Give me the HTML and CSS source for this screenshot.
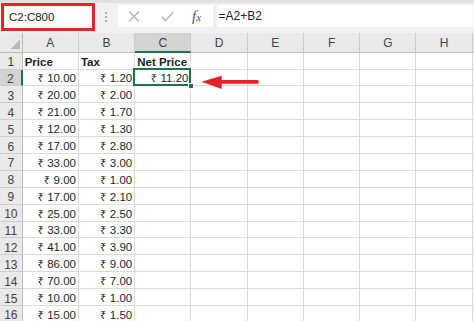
FILE: index.html
```html
<!DOCTYPE html>
<html lang="en">
<head>
  <meta charset="UTF-8">
  <meta name="viewport" content="width=device-width, initial-scale=1.0">
  <link rel="stylesheet" href="styles.css">
  <title>Net Price</title>
</head>
<body>
  <div class="formula-bar">
    <div class="name-box">C2:C800</div>
    <svg class="grip" width="4" height="12" viewBox="0 0 4 12">
      <circle cx="2" cy="2" r="1.1" fill="#a3a3a3"/>
      <circle cx="2" cy="6" r="1.1" fill="#a3a3a3"/>
      <circle cx="2" cy="10" r="1.1" fill="#a3a3a3"/>
    </svg>
    <div class="fx-buttons">
      <svg class="btn-cancel" width="12" height="11" viewBox="0 0 12 11">
        <path d="M1 0.5 L11 10.5 M11 0.5 L1 10.5" stroke="#b3b3b3" stroke-width="1.2" fill="none"/>
      </svg>
      <svg class="btn-enter" width="13" height="11" viewBox="0 0 13 11">
        <path d="M0.8 5.8 L4.6 9.8 L12.4 1" stroke="#b3b3b3" stroke-width="1.3" fill="none"/>
      </svg>
      <span class="fx">f<small>x</small></span>
    </div>
    <div class="formula-input">=A2+B2</div>
  </div>

  <div class="sheet" id="sheet">
    <svg class="arrow" width="62" height="16" viewBox="0 0 62 16">
      <polygon points="2.5,7.7 22.7,1.7 22.7,15" fill="#e3212b"/>
      <line x1="20" y1="7.9" x2="58" y2="7.9" stroke="#e3212b" stroke-width="3.8" stroke-linecap="round"/>
    </svg>
  </div>

  <script>
    const prices = ['10.00', '20.00', '21.00', '12.00', '17.00', '33.00', '9.00', '17.00',
                    '25.00', '33.00', '41.00', '86.00', '70.00', '10.00', '15.00'];
    const taxes = ['1.20', '2.00', '1.70', '1.30', '2.80', '3.00', '1.00', '2.10',
                   '2.50', '3.30', '3.90', '9.00', '7.00', '1.00', '1.50'];

    const sheet = document.getElementById('sheet');

    function addCell(text, cls) {
      const cell = document.createElement('div');
      cell.className = 'cell ' + (cls || '');
      cell.textContent = text || '';
      sheet.appendChild(cell);
      return cell;
    }

    // column headers (the last one is only a sliver at the edge)
    addCell('', 'corner');
    'ABCDEFGH'.split('').forEach(function (letter) {
      addCell(letter, 'col-head' + (letter === 'C' ? ' active' : ''));
    });
    addCell('', 'col-head');

    // row 1: titles
    addCell('1', 'row-head');
    addCell('Price', 'bold');
    addCell('Tax', 'bold');
    addCell('Net Price', 'bold');
    for (let c = 0; c < 6; c++) addCell('');

    // rows 2..16
    prices.forEach(function (price, i) {
      const row = i + 2;
      addCell(String(row), 'row-head' + (row === 2 ? ' active' : ''));
      addCell('₹ ' + price, 'num');
      addCell('₹ ' + taxes[i], 'num');
      if (row === 2) {
        addCell('₹ 11.20', 'num selected');
      } else {
        addCell('');
      }
      for (let c = 0; c < 6; c++) addCell('');
    });
  </script>
</body>
</html>
```

FILE: styles.css
```css
body {
  margin: 0;
  height: 321px;
  overflow: hidden;
  font-family: 'Liberation Sans', 'Noto Sans', Arial, sans-serif;
  background-color: #fff;
}

/* formula bar */
.formula-bar {
  display: flex;
  align-items: flex-start;
  height: 33px;
  background: linear-gradient(#e2e2e2 0 3px, #f1f1f1 3px);
}

.name-box {
  box-sizing: border-box;
  width: 94px;
  height: 28px;
  margin: 3px 0 0 1px;
  padding-left: 5px;
  border: 3px solid #e3242b;
  background-color: #fff;
  color: #222;
  font-size: 11.5px;
  line-height: 23px;
}

.grip {
  margin: 11px 0 0 9px;
}

.fx-buttons {
  display: flex;
  align-items: center;
  width: 95px;
  height: 22px;
  margin: 5px 0 0 10px;
  padding-left: 10px;
  box-sizing: border-box;
  background-color: #fff;
}

.btn-enter {
  margin-left: 21px;
}

.fx {
  margin-left: 18px;
  font-family: 'Liberation Serif', 'Times New Roman', serif;
  font-style: italic;
  font-size: 15px;
  color: #555;
}

.fx small {
  font-size: 11px;
}

.formula-input {
  flex: 1;
  height: 22px;
  margin: 5px 1px 0 4px;
  padding-left: 1.5px;
  background-color: #fff;
  color: #222;
  font-size: 12px;
  line-height: 22px;
}

/* grid */
.sheet {
  position: relative;
  display: grid;
  grid-template-columns: 22.7px repeat(8, 56.25px) 1fr;
  grid-template-rows: 19.7px;
  grid-auto-rows: 16.9px;
  font-size: 11.5px;
  color: #1e1e1e;
}

.cell {
  box-sizing: border-box;
  display: flex;
  align-items: flex-end;
  padding: 0 2px 0.5px;
  border-right: 1px solid #dadada;
  border-bottom: 1px solid #dadada;
  line-height: 1;
  white-space: nowrap;
  overflow: hidden;
}

.num {
  justify-content: flex-end;
}

.bold {
  font-weight: bold;
}

.corner {
  background: linear-gradient(to bottom right, transparent 50%, #b9b9b9 50%) no-repeat right 2px bottom 3px / 9px 10px, #e9e9e9;
  border-right-color: #bcbcbc;
  border-bottom-color: #bcbcbc;
}

.col-head {
  justify-content: center;
  align-items: center;
  padding-top: 2px;
  background-color: #e9e9e9;
  border-right-color: #cdcdcd;
  border-bottom-color: #bcbcbc;
  color: #444;
  font-size: 12px;
}

.row-head {
  justify-content: center;
  background-color: #e9e9e9;
  border-right-color: #bcbcbc;
  border-bottom-color: #cdcdcd;
  color: #444;
  font-size: 12px;
}

.col-head.active {
  background-color: #d3d3d3;
  border-bottom: 2px solid #217346;
}

.row-head.active {
  background-color: #d3d3d3;
  border-right: 2px solid #217346;
}

.selected {
  position: relative;
  z-index: 1;
  overflow: visible;
}

.selected::after {
  content: '';
  position: absolute;
  left: -2px;
  top: -2px;
  right: -1px;
  bottom: -1px;
  border: 2px solid #217346;
}

.selected::before {
  content: '';
  position: absolute;
  right: -4px;
  bottom: -4px;
  width: 4px;
  height: 4px;
  background-color: #217346;
  border: 1px solid #fff;
  z-index: 2;
}

.arrow {
  position: absolute;
  left: 199px;
  top: 41px;
  z-index: 3;
}
```
